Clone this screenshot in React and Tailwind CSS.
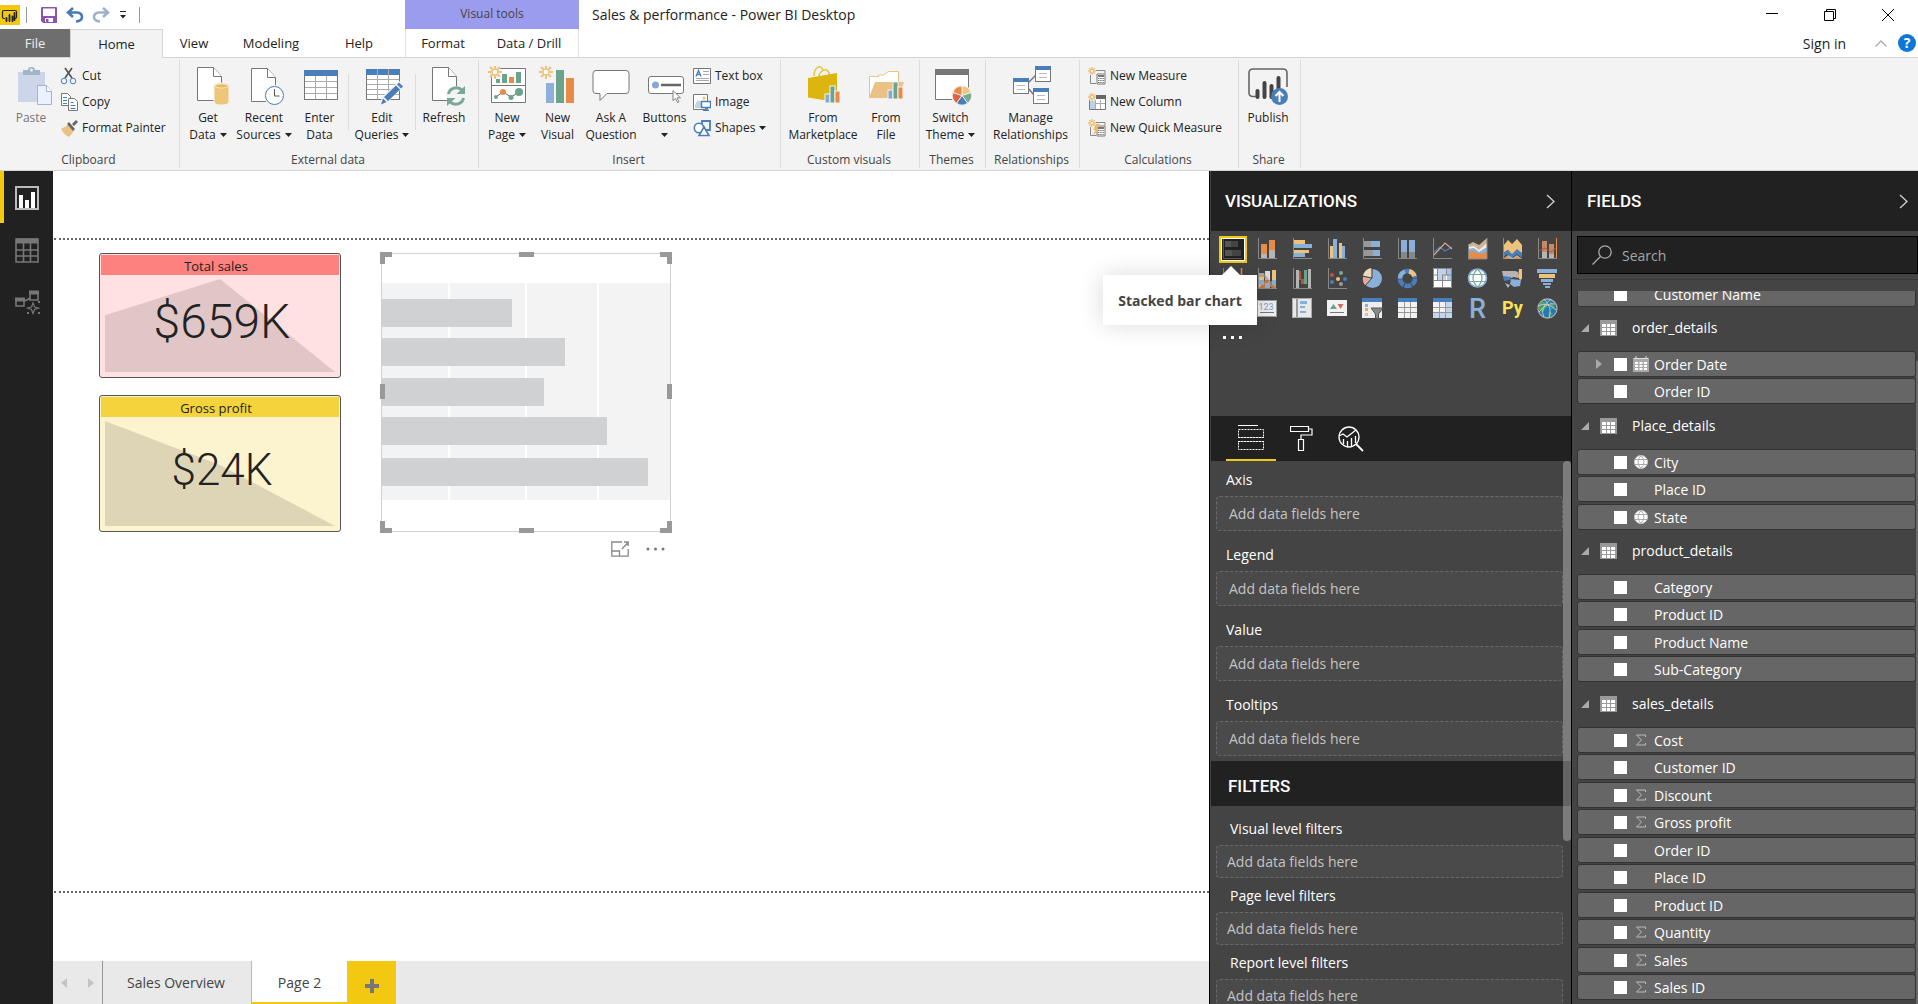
import React from "react";

const GREY = "#777";
const BLUE = "#4a7ebb";

/* ---------- shared drawing parts ---------- */

function Doc({ x, y }) {
  return (
    <g fill="#fff" stroke={GREY}>
      <path d={`M${x + 0.5} ${y + 0.5}h16l8 9v24h-24z`} />
      <path d={`M${x + 16.5} ${y + 0.5}v9h8`} />
    </g>
  );
}

function Sun({ x, y, r = 7 }) {
  const rays = [0, 45, 90, 135, 180, 225, 270, 315];
  return (
    <g stroke="#eec27a" strokeWidth={r > 5 ? 2 : 1.4} fill="none">
      {rays.map((a) => (
        <path key={a} d={`M${x} ${y - r}V${y - r * 0.5}`} transform={`rotate(${a} ${x} ${y})`} />
      ))}
      <circle cx={x} cy={y} r={r * 0.42} strokeWidth="1.4" fill="#fff" />
    </g>
  );
}

function MiniBars({ x, y }) {
  return (
    <g stroke="#f3f3f3" strokeWidth="1">
      <rect x={x} y={y + 8} width="5" height="9" fill="#84aad2" />
      <rect x={x + 5} y={y} width="5" height="17" fill="#6ca38d" />
      <rect x={x + 10} y={y + 5} width="5" height="12" fill="#e88b46" />
    </g>
  );
}

function Big({ children }) {
  return (
    <svg width="44" height="40" viewBox="0 0 44 40" className="shrink-0" aria-hidden="true">
      {children}
    </svg>
  );
}

/* ---------- ribbon icons ---------- */

const PasteIcon = () => (
  <Big>
    <path d="M9 6h27v30H9z" fill="#ccd6e8" />
    <path d="M14 4h5a3.5 3 0 0 1 7 0h5v5H14z" fill="#a2b3ce" />
    <circle cx="22.500" cy="4" r="1.500" fill="#f3f3f3" />
    <path d="M28.500 19.500h9l5 6v13h-14z" fill="#e9f2fe" stroke="#a2b3ce" />
    <path d="M37.500 19.500v6h5" fill="#fff" stroke="#a2b3ce" />
  </Big>
);
const GetDataIcon = () => (
  <Big>
    <Doc x={11} y={1} />
    <path d="M28 20c0-4 15-4 15 0v16c0 4-15 4-15 0z" fill="#eec67a" stroke="#f3f3f3" />
    <ellipse cx="35.500" cy="20" rx="6.500" ry="2" fill="#e8b862" stroke="#f8e6c0" />
  </Big>
);
const RecentIcon = () => (
  <Big>
    <Doc x={9} y={2} />
    <circle cx="32.500" cy="29.500" r="10.500" fill="#f3f3f3" />
    <circle cx="32.500" cy="29.500" r="9" fill="#fff" stroke={BLUE} />
    <path d="M32.500 23v7h5" fill="none" stroke="#555" />
  </Big>
);
const EnterDataIcon = () => (
  <Big>
    <rect x="6.500" y="4.500" width="33" height="29" fill="#fff" stroke={GREY} />
    <path d="M6 4h34v6H6z" fill={BLUE} />
    <path d="M17.500 10v23M28.500 10v23M7 15.500h32M7 21.500h32M7 27.500h32" stroke="#aaa" />
  </Big>
);
const EditQueriesIcon = () => (
  <Big>
    <rect x="6.500" y="3.500" width="33" height="30" fill="#fff" stroke={GREY} />
    <path d="M6 3h34v6H6z" fill={BLUE} />
    <path d="M17.500 3v30M28.500 3v30M7 13.500h32M7 18.500h32M7 23.500h32M7 28.500h32" stroke="#aaa" />
    <path d="M20 39l2-8 17-16 5 5-17 17z" fill="#f3f3f3" />
    <path d="M21 38.500l2-6 3.500 3.500zM24 31l12-11.500 4 4L28 35zM37 18.500l2-2 4 4-2 2z" fill={BLUE} />
  </Big>
);
const RefreshIcon = () => (
  <Big>
    <Doc x={10} y={1} />
    <circle cx="34" cy="30" r="10" fill="#f3f3f3" />
    <path d="M26.500 28a8 7.500 0 0 1 13.500-4M41.500 32a8 7.500 0 0 1-13.500 4" fill="none" stroke="#78a898" strokeWidth="3" />
    <path d="M43 20v8h-8.500zM25 40v-8h8.500z" fill="#78a898" />
  </Big>
);
const NewPageIcon = () => (
  <Big>
    <path d="M6.500 2.500h34v34h-34z" fill="#fff" stroke={GREY} />
    <path d="M7 19.500h33" stroke={GREY} />
    <path d="M17 8h5v9h-5zM31 6h5v11h-5zM11 13h4v4h-4z" fill="#6ca38d" />
    <path d="M24 11h5v6h-5z" fill="#e88b46" />
    <path d="M11 31l7-5 8 5 8-5" fill="none" stroke="#666" />
    <circle cx="11" cy="31" r="2" fill="#6ca38d" />
    <circle cx="18" cy="26" r="3" fill="#e88b46" />
    <circle cx="26" cy="31.500" r="2.500" fill="#6ca38d" />
    <circle cx="34" cy="26" r="4" fill="#6ca38d" />
    <circle cx="10" cy="6" r="6.500" fill="#f3f3f3" />
    <Sun x={10} y={6} />
  </Big>
);
const NewVisualIcon = () => (
  <Big>
    <path d="M10 17h8v20h-8z" fill="#8fb0d6" />
    <path d="M20 4h8v33h-8z" fill="#6ca38d" />
    <path d="M30 12h8v25h-8z" fill="#e88b46" />
    <Sun x={10} y={6} />
  </Big>
);
const AskIcon = () => (
  <Big>
    <path d="M7 4.500h30q3 0 3 3v17q0 3-3 3H18l-7 7v-7H7q-3 0-3-3v-17q0-3 3-3z" fill="#fff" stroke={GREY} />
  </Big>
);
const ButtonsIcon = () => (
  <Big>
    <rect x="5.500" y="10.500" width="35" height="17" rx="2.500" fill="#fff" stroke={GREY} />
    <circle cx="12.500" cy="19" r="3.500" fill="#84aad2" />
    <path d="M18 19h20" stroke="#666" strokeWidth="2.500" />
    <path d="M30 24.500v10l2.500-2 2 4 1.500-.7-2-4h3.500z" fill="#fff" stroke="#777" strokeWidth=".9" />
  </Big>
);
const MarketIcon = () => (
  <Big>
    <path d="M13 10c0-9 7-12 9-6M18 11c0-6 9-12 11-1" fill="none" stroke="#e6c33f" strokeWidth="1.500" />
    <path d="M7 12l29-5v26l-14 1-15-2.500z" fill="#ddb50f" />
    <MiniBars x={24} y={20} />
  </Big>
);
const FromFileIcon = () => (
  <Big>
    <path d="M5.500 31V10.500h9V9h5l5-3.500h10v25z" fill="#fff" stroke="#eec286" />
    <path d="M5 32l6-16h29l-6 16z" fill="#ecc186" />
    <MiniBars x={24} y={16} />
  </Big>
);
const ThemeIcon = () => {
  const colors = ["#eec67a", "#78a898", "#4a7ebb", "#e0603f", "#e88b46"];
  return (
    <Big>
      <path d="M6.500 3.500h33v30h-33z" fill="#fff" stroke={GREY} />
      <path d="M6 3h34v6H6z" fill={GREY} />
      <circle cx="33" cy="29.500" r="10.500" fill="#f3f3f3" />
      {colors.map((c, i) => (
        <path key={c} d="M33 29.500V20a9.500 9.500 0 0 1 9 6.600z" fill={c} stroke="#f3f3f3" strokeWidth=".8" transform={`rotate(${i * 72} 33 29.500)`} />
      ))}
    </Big>
  );
};
function RelBox({ x, y }) {
  return (
    <g>
      <rect x={x + 0.5} y={y + 0.5} width="15" height="15" fill="#fff" stroke={GREY} />
      <rect x={x} y={y} width="16" height="4" fill={BLUE} />
      <path d={`M${x + 4} ${y + 7.5}h8M${x + 4} ${y + 11.5}h8`} stroke="#bbb" />
    </g>
  );
}
const RelationsIcon = () => (
  <Big>
    <path d="M18 18l9-9M18 21l7 8" stroke={GREY} strokeWidth="1.500" />
    <RelBox x={4} y={12} />
    <RelBox x={26} y={0} />
    <RelBox x={24} y={22} />
  </Big>
);
const PublishIcon = () => (
  <Big>
    <path d="M10 30.500H7q-4 0-4-4V7q0-4 4-4h30q4 0 4 4v14" fill="none" stroke="#666" strokeWidth="1.600" />
    <path d="M11.500 25v6M18.500 17v14M25.500 20v11M32.500 12v10" stroke="#444" strokeWidth="4" strokeLinecap="round" />
    <circle cx="33.500" cy="30.500" r="8.500" fill={BLUE} />
    <path d="M33.500 36V26M29.500 30l4-4 4 4" fill="none" stroke="#fff" strokeWidth="2" />
  </Big>
);

function Small({ children }) {
  return (
    <svg width="18" height="18" viewBox="0 0 18 18" className="shrink-0" aria-hidden="true">
      {children}
    </svg>
  );
}
const CutIcon = () => (
  <Small>
    <path d="M5 1l7 10M12 1L5 11" stroke="#555" strokeWidth="1.700" />
    <circle cx="4" cy="14" r="2.800" fill="none" stroke={BLUE} />
    <circle cx="13" cy="14" r="2.800" fill="none" stroke={BLUE} />
  </Small>
);
const CopyIcon = () => (
  <Small>
    <path d="M1.500.5h6l3 3v9h-9z" fill="#fff" stroke={GREY} />
    <path d="M3 4.500h4M3 7.500h4M3 10.500h4" stroke={BLUE} />
    <path d="M8.500 5.500h6l3 3v9h-9z" fill="#fff" stroke={GREY} />
    <path d="M10.500 9.500h3M10.500 12.500h5M10.500 15.500h5" stroke={BLUE} />
  </Small>
);
const PainterIcon = () => (
  <Small>
    <path d="M1 10l7-4 6 6-5 6q-5-2-8-8z" fill="#ecc186" />
    <path d="M7 5l2-2 6 7-2 2zM12 5l4-4 2 2-4 4z" fill="#666" />
  </Small>
);
const TextBoxIcon = () => (
  <Small>
    <path d="M.5 1.500h17v15H.500z" fill="#fff" stroke={GREY} />
    <path d="M3 9.500l2.500-6 2.500 6M4 7.500h3" fill="none" stroke={BLUE} strokeWidth="1.400" />
    <path d="M10 4.500h6M10 7.500h6M3 11.500h13M3 13.500h13" stroke="#aaa" />
  </Small>
);
const ImageIcon = () => (
  <Small>
    <path d="M.5 1.500h14v15H.500z" fill="#fff" stroke={GREY} />
    <circle cx="11" cy="5" r="1.600" fill="#eec27a" />
    <path d="M2 15v-3q3-7 6-3v6z" fill="#c3d3e8" />
    <path d="M8.500 8.500h9v6h-9z" fill="#fff" stroke={BLUE} strokeWidth="1.400" />
    <path d="M13 15v2M10 17.500h6" stroke={BLUE} strokeWidth="1.500" />
  </Small>
);
const ShapesIcon = () => (
  <Small>
    <path d="M9 2h8v9H9z" fill="none" stroke={BLUE} strokeWidth="1.800" />
    <circle cx="6" cy="9" r="4.700" fill="#fff" stroke={BLUE} strokeWidth="1.600" />
    <path d="M11 8l5 8.500H6z" fill="#fff" stroke={BLUE} strokeWidth="1.600" />
  </Small>
);
const Calculator = () => (
  <g>
    <path d="M2.500 8v8.500H8M8 3.500h9v3" fill="none" stroke="#888" />
    <path d="M9 7h8v10H9z" fill="#fff" stroke="#777" />
    <path d="M10 8h6v2h-6z" fill="#777" />
    <path d="M10 11.500h6M10 13.500h6M10 15.500h6" stroke="#777" strokeDasharray="1.500 .7" />
  </g>
);
const MeasureIcon = () => (
  <Small>
    <Calculator />
    <Sun x={4} y={4} r={4} />
  </Small>
);
const ColumnIcon = () => (
  <Small>
    <path d="M1.500 2.500h16v14h-16z" fill="#fff" stroke="#777" />
    <path d="M2 8h5v8H2z" fill="#bdd2ea" />
    <path d="M8 2h10v4H8z" fill="#666" />
    <path d="M7.500 7v9M12.500 7v9M7 10.500h10" stroke="#aaa" />
    <circle cx="4" cy="4" r="4" fill="#f3f3f3" />
    <Sun x={4} y={4} r={4} />
  </Small>
);
const QuickIcon = () => (
  <Small>
    <Calculator />
    <Sun x={4} y={4} r={4} />
    <path d="M8 5h4l-3 5h2l-6 7 2-6H5z" fill="#eeb96b" />
  </Small>
);

/* ---------- ribbon ---------- */

const Caret = () => (
  <svg width="7" height="4" viewBox="0 0 7 4" className="shrink-0" aria-hidden="true">
    <path d="M0 0h7L3.500 4z" fill="#222" />
  </svg>
);

function BigButton({ icon: Icon, lines, caret, width, muted }) {
  return (
    <button className={`${width} flex shrink-0 flex-col items-center text-[12px] leading-[17px] whitespace-nowrap ${muted ? "text-[#777]" : "text-[#222]"}`}>
      <Icon />
      <span className="mt-[3px]">{lines[0]}</span>
      <span className="flex h-[17px] items-center gap-1">
        {lines[1]}
        {caret && <Caret />}
      </span>
    </button>
  );
}

function SmallButton({ icon: Icon, label, caret }) {
  return (
    <button className="flex h-[26px] items-center gap-1 text-[12px] whitespace-nowrap text-[#222]">
      <Icon />
      <span>{label}</span>
      {caret && <Caret />}
    </button>
  );
}

function Group({ label, width, children }) {
  return (
    <section className={`${width} flex shrink-0 flex-col justify-between border-r border-[#dcdcdc] text-[#444]`}>
      <div className="flex pt-1.5">{children}</div>
      <h2 className="pr-[2px] text-center text-[12px] leading-[17px]">{label}</h2>
    </section>
  );
}

const Rule = () => <div className="mx-px mt-2 h-[56px] w-px shrink-0 bg-[#dcdcdc]" />;

function Ribbon() {
  return (
    <div className="flex h-[114px] shrink-0 border-y border-[#d4d4d4] bg-[#f3f3f3] py-[2px]">
      <Group label="Clipboard" width="w-[180px]">
        <div className="flex w-[60px] shrink-0 justify-center pl-[2px]">
          <BigButton icon={PasteIcon} lines={["Paste"]} width="w-[44px]" muted />
        </div>
        <div className="-mt-[3px] flex flex-col">
          <SmallButton icon={CutIcon} label="Cut" />
          <SmallButton icon={CopyIcon} label="Copy" />
          <SmallButton icon={PainterIcon} label="Format Painter" />
        </div>
      </Group>
      <Group label="External data" width="w-[299px]">
        <BigButton icon={GetDataIcon} lines={["Get", "Data"]} caret width="w-[56px]" />
        <BigButton icon={RecentIcon} lines={["Recent", "Sources"]} caret width="w-[56px]" />
        <BigButton icon={EnterDataIcon} lines={["Enter", "Data"]} width="w-[55px]" />
        <Rule />
        <BigButton icon={EditQueriesIcon} lines={["Edit", "Queries"]} caret width="w-[64px]" />
        <Rule />
        <BigButton icon={RefreshIcon} lines={["Refresh"]} width="w-[54px]" />
      </Group>
      <Group label="Insert" width="w-[302px]">
        <BigButton icon={NewPageIcon} lines={["New", "Page"]} caret width="w-[56px]" />
        <BigButton icon={NewVisualIcon} lines={["New", "Visual"]} width="w-[45px]" />
        <BigButton icon={AskIcon} lines={["Ask A", "Question"]} width="w-[62px]" />
        <BigButton icon={ButtonsIcon} lines={["Buttons"]} caret width="w-[45px]" />
        <div className="-mt-[3px] ml-1.5 flex flex-col">
          <SmallButton icon={TextBoxIcon} label="Text box" />
          <SmallButton icon={ImageIcon} label="Image" />
          <SmallButton icon={ShapesIcon} label="Shapes" caret />
        </div>
      </Group>
      <Group label="Custom visuals" width="w-[139px]">
        <BigButton icon={MarketIcon} lines={["From", "Marketplace"]} width="w-[84px]" />
        <BigButton icon={FromFileIcon} lines={["From", "File"]} width="w-[42px]" />
      </Group>
      <Group label="Themes" width="w-[66px]">
        <BigButton icon={ThemeIcon} lines={["Switch", "Theme"]} caret width="w-[61px]" />
      </Group>
      <Group label="Relationships" width="w-[94px]">
        <BigButton icon={RelationsIcon} lines={["Manage", "Relationships"]} width="w-[89px]" />
      </Group>
      <Group label="Calculations" width="w-[159px]">
        <div className="-mt-[3px] ml-2 flex flex-col">
          <SmallButton icon={MeasureIcon} label="New Measure" />
          <SmallButton icon={ColumnIcon} label="New Column" />
          <SmallButton icon={QuickIcon} label="New Quick Measure" />
        </div>
      </Group>
      <Group label="Share" width="w-[62px]">
        <BigButton icon={PublishIcon} lines={["Publish"]} width="w-[58px]" />
      </Group>
    </div>
  );
}

/* ---------- title bar ---------- */

function TopBar() {
  const tab = "flex h-[28px] items-center justify-center pt-[2px] text-[13px]";
  return (
    <header className="flex h-[57px] shrink-0 bg-white text-[#222]">
      <div className="flex flex-col">
        <div className="flex h-[29px] items-center">
          <svg width="20" height="20" viewBox="0 0 20 20" aria-label="Power BI">
            <path d="M0 0h20v20H0z" fill="#f2c811" />
            <path d="M5 13.500H4Q2.500 13.500 2.500 12V7Q2.500 5.500 4 5.500h11q1.500 0 1.500 1.500v5q0 1.500-1.500 1.500" fill="none" stroke="#222" strokeWidth="1.200" />
            <path d="M6.500 13v3M9.500 10v6M12.500 11.500V16M14.500 8v7" stroke="#222" strokeWidth="1.800" strokeLinecap="round" />
          </svg>
          <span className="ml-1.5 h-4 w-px bg-[#999]" />
          <button aria-label="Save" className="ml-[14px]">
            <svg width="16" height="16" viewBox="0 0 16 16">
              <path d="M1 0h14q1 0 1 1v15H2l-2-2V1q0-1 1-1z" fill="#8a56ac" />
              <path d="M2 1.500h12V9H2zM4 11h8v4H4z" fill="#fff" />
              <path d="M5 12h2.500v3H5z" fill="#8a56ac" />
            </svg>
          </button>
          <button aria-label="Undo" className="ml-[9px]">
            <svg width="18" height="16" viewBox="0 0 18 16">
              <path d="M2 5.500h9q5 .5 5 4.500t-6 4.500M7 1L2 5.500 7 10" fill="none" stroke="#457ab4" strokeWidth="2.600" />
            </svg>
          </button>
          <button aria-label="Redo" className="ml-2">
            <svg width="18" height="16" viewBox="0 0 18 16">
              <path d="M16 5.500H7Q2 6 2 10t6 4.500M11 1l5 4.500L11 10" fill="none" stroke="#9fb1cb" strokeWidth="2.600" />
            </svg>
          </button>
          <button aria-label="Customize toolbar" className="ml-[9px]">
            <svg width="8" height="8" viewBox="0 0 8 8">
              <path d="M1 .5h6" stroke="#222" />
              <path d="M1 4h6L4 7.500z" fill="#222" />
            </svg>
          </button>
          <span className="ml-3 h-4 w-px bg-[#999]" />
        </div>
        <nav className="flex">
          <button className={`${tab} w-[70px] bg-[#6e6e6e] text-[#eee]`}>File</button>
          <button className={`${tab} relative z-10 -mb-px h-[29px] w-[93px] border border-b-0 border-[#d4d4d4] bg-[#f3f3f3]`}>Home</button>
          <button className={`${tab} w-[62px]`}>View</button>
          <button className={`${tab} w-[92px]`}>Modeling</button>
          <button className={`${tab} w-[84px]`}>Help</button>
        </nav>
      </div>
      <div className="ml-1 flex w-[174px] flex-col">
        <div className="flex h-[29px] items-center justify-center bg-[#9c9cee] pb-[2px] text-[12px] text-[#444]">Visual tools</div>
        <div className="flex border-x border-[#e2e2e2]">
          <button className={`${tab} w-[74px]`}>Format</button>
          <button className={`${tab} w-[98px]`}>Data / Drill</button>
        </div>
      </div>
      <h1 className="ml-[13px] h-[29px] text-[14px] leading-[29px]">Sales &amp; performance - Power BI Desktop</h1>
      <div className="ml-auto flex flex-col items-end">
        <div className="flex h-[29px] items-center gap-[46px] pr-6">
          <button aria-label="Minimize">
            <svg width="12" height="12" viewBox="0 0 12 12"><path d="M0 4.500h12" stroke="#000" /></svg>
          </button>
          <button aria-label="Restore">
            <svg width="12" height="12" viewBox="0 0 12 12" fill="none" stroke="#000">
              <path d="M.5 2.500h9v9h-9zM2.500 2V.500h9v9H10" />
            </svg>
          </button>
          <button aria-label="Close">
            <svg width="12" height="12" viewBox="0 0 12 12"><path d="M0 0l12 12M12 0L0 12" stroke="#000" /></svg>
          </button>
        </div>
        <div className="flex h-[28px] items-center pr-[2px]">
          <button className="text-[14px]">Sign in</button>
          <button aria-label="Collapse ribbon" className="ml-[29px]">
            <svg width="12" height="7" viewBox="0 0 12 7"><path d="M.5 6.500L6 1l5.500 5.500" fill="none" stroke="#aaa" strokeWidth="1.300" /></svg>
          </button>
          <button aria-label="Help" className="ml-[11px] flex size-[18px] items-center justify-center rounded-full bg-[#0f76d7] text-[14px] leading-none font-bold text-white">?</button>
        </div>
      </div>
    </header>
  );
}

/* ---------- left rail ---------- */

function Rail() {
  const item = "flex h-[52px] w-full items-center border-l-4 pt-[2px] pl-[11px]";
  return (
    <nav className="w-[53px] shrink-0 bg-[#212121]">
      <button aria-label="Report" className={`${item} border-[#f2c811]`}>
        <svg width="24" height="24" viewBox="0 0 24 24">
          <path d="M1 1h22v22H1z" fill="none" stroke="#bbb" strokeWidth="2" />
          <path d="M4 9h4v13H4zM10 14h4v8h-4zM16 6h4v16h-4z" fill="#fff" />
        </svg>
      </button>
      <button aria-label="Data" className={`${item} border-transparent`}>
        <svg width="24" height="25" viewBox="0 0 24 25" stroke="#777">
          <path d="M1 1h22v23H1z" fill="none" strokeWidth="1.600" />
          <path d="M1 3h22" strokeWidth="5" />
          <path d="M8.500 5v19M15.500 5v19M1 12h22M1 18h22" strokeWidth="1.600" />
        </svg>
      </button>
      <button aria-label="Model" className={`${item} border-transparent`}>
        <svg width="26" height="25" viewBox="0 0 26 25" fill="none" stroke="#777" strokeWidth="1.600">
          <path d="M15 2h8v8h-8zM1 9h8v7H1zM10 11l5-3" />
          <path d="M14 2.500h10M0 9.500h10" strokeWidth="4" />
          <path d="M18 13l1.500 4 4 1-4 1.500-1.500 4-1.500-4-4-1.500 4-1z" strokeWidth="1.200" />
          <path d="M23 12h2M23 23h2M12 23h2" strokeWidth="2" />
        </svg>
      </button>
    </nav>
  );
}

/* ---------- canvas ---------- */

const bars = [
  { top: 45, width: 130 },
  { top: 84, width: 183 },
  { top: 124, width: 162 },
  { top: 163, width: 225 },
  { top: 204, width: 266 },
];

function Card({ title, value, place, head, body, points, size }) {
  return (
    <article className={`${place} ${body} absolute flex w-[242px] flex-col rounded-[3px] border border-[#555] p-px`}>
      <h3 className={`${head} h-[20px] pr-2 text-center text-[13px] leading-[23px] text-[#222]`}>{title}</h3>
      <div className="relative m-1 flex flex-1 items-center justify-center">
        <svg viewBox="0 0 100 100" preserveAspectRatio="none" className="absolute inset-0 size-full" aria-hidden="true">
          <polygon points={points} fill="#212121" fillOpacity=".14" />
        </svg>
        <p className={`${size} relative pb-2 pl-1 font-[Roboto] leading-none font-light text-[#222]`}>{value}</p>
      </div>
    </article>
  );
}

function BarPlaceholder() {
  return (
    <figure className="absolute top-[13px] left-[327px] h-[279px] w-[290px] border border-[#d2d2d2] bg-white">
      <div className="mt-[29px] flex h-[217px] gap-0.5">
        <div className="w-[66px] bg-[#f3f3f3]" />
        <div className="w-[75px] bg-[#f3f3f3]" />
        <div className="w-[70px] bg-[#f3f3f3]" />
        <div className="flex-1 bg-[#f3f3f3]" />
      </div>
      {bars.map((b) => (
        <div key={b.top} className="absolute left-0 h-[28px] bg-[#d0d1d2]" style={{ top: b.top, width: b.width }} />
      ))}
      <span className="absolute -top-[2px] -left-[2px] size-3 border-t-[5px] border-l-[5px] border-[#999]" />
      <span className="absolute -top-[2px] -right-[2px] size-3 border-t-[5px] border-r-[5px] border-[#999]" />
      <span className="absolute -bottom-[2px] -left-[2px] size-3 border-b-[5px] border-l-[5px] border-[#999]" />
      <span className="absolute -right-[2px] -bottom-[2px] size-3 border-r-[5px] border-b-[5px] border-[#999]" />
      <span className="absolute -top-[2px] left-[137px] h-[5px] w-[15px] bg-[#999]" />
      <span className="absolute -bottom-[2px] left-[137px] h-[5px] w-[15px] bg-[#999]" />
      <span className="absolute top-[130px] -left-[2px] h-[15px] w-[5px] bg-[#999]" />
      <span className="absolute top-[130px] -right-[2px] h-[15px] w-[5px] bg-[#999]" />
      <div className="absolute top-[287px] right-[5px] flex items-center gap-[17px]">
        <button aria-label="Focus mode">
          <svg width="18" height="16" viewBox="0 0 18 16" fill="none" stroke="#888">
            <path d="M11 1H.800v14.200h16.400V8M1 10h7.500v5M11 8l6-6.500M13 1h4.200v4" strokeWidth="1.300" />
          </svg>
        </button>
        <button aria-label="More options">
          <svg width="19" height="4" viewBox="0 0 19 4" fill="#777">
            <circle cx="2" cy="2" r="1.500" /><circle cx="9.500" cy="2" r="1.500" /><circle cx="17" cy="2" r="1.500" />
          </svg>
        </button>
      </div>
    </figure>
  );
}

function Canvas() {
  return (
    <main className="flex min-w-0 flex-1 flex-col bg-white">
      <div className="flex min-h-0 flex-1 flex-col pt-[67px] pb-[68px] pl-px">
        <div className="relative flex-1 border-y-2 border-dotted border-[#666]">
          <Card title="Total sales" value="$659K" place="top-[13px] left-[45px] h-[125px]" head="bg-[#fd817e]" body="bg-[#ffe1e2]" points="0,39 50,0 100,100 0,100" size="text-[48px]" />
          <Card title="Gross profit" value="$24K" place="top-[155px] left-[45px] h-[137px]" head="bg-[#f4d33c]" body="bg-[#fcf3cf]" points="0,0 50,42 100,100 0,100" size="text-[44px]" />
          <BarPlaceholder />
        </div>
      </div>
      <footer className="flex h-[43px] shrink-0 bg-[#e9e9e9] text-[14px] text-[#444]">
        <div className="flex w-[50px] items-center justify-between border-r border-[#999] px-2">
          <button aria-label="Previous page"><svg width="6" height="10" viewBox="0 0 6 10"><path d="M6 0v10L0 5z" fill="#c4c4c4" /></svg></button>
          <button aria-label="Next page"><svg width="6" height="10" viewBox="0 0 6 10"><path d="M0 0v10l6-5z" fill="#c4c4c4" /></svg></button>
        </div>
        <button className="w-[149px] border-r border-[#bbb] pr-[2px]">Sales Overview</button>
        <button className="w-[95px] border-b-2 border-[#f2c811] bg-white pt-0.5">Page 2</button>
        <button aria-label="New page" className="flex w-[49px] items-center justify-center bg-[#f2c811] pt-1.5">
          <svg width="14" height="14" viewBox="0 0 14 14"><path d="M7 0v14M0 7h14" stroke="#777" strokeWidth="4" /></svg>
        </button>
      </footer>
    </main>
  );
}

/* ---------- visualization gallery ---------- */

const O = "#e88b46";
const Y = "#ecc27c";
const B = "#8aafd8";
const D = "#4a7ebb";
const G = "#b5b5b5";
const Axes = () => <path d="M1.500 0v20.500H20" fill="none" stroke="#888" />;
const R = ({ x, y, w, h, f }) => <rect x={x} y={y} width={w} height={h} fill={f} />;

const visuals = [
  ["Stacked bar chart", <><path d="M1.500 0v20.500H20" stroke="#555" fill="none" /><R x={3} y={3} w={6} h={6} f="#555" /><R x={9} y={3} w={7} h={6} f="#444" /><R x={3} y={12} w={7} h={6} f="#555" /><R x={10} y={12} w={9} h={6} f="#444" /></>],
  ["Stacked column chart", <><Axes /><R x={4} y={6} w={6} h={10} f={O} /><R x={4} y={16} w={6} h={4} f={G} /><R x={12} y={2} w={6} h={10} f={O} /><R x={12} y={12} w={6} h={8} f={G} /></>],
  ["Clustered bar chart", <><Axes /><R x={2} y={2} w={11} h={4} f={Y} /><R x={2} y={6} w={18} h={4} f={B} /><R x={2} y={12} w={15} h={3} f={Y} /><R x={2} y={15} w={11} h={4} f={B} /></>],
  ["Clustered column chart", <><Axes /><R x={3} y={8} w={3} h={12} f={Y} /><R x={6} y={1} w={4} h={19} f={B} /><R x={12} y={5} w={3} h={15} f={Y} /><R x={15} y={8} w={3} h={12} f={B} /></>],
  ["100% stacked bar chart", <><Axes /><R x={2} y={3} w={7} h={6} f="#999" /><R x={9} y={3} w={9} h={6} f={B} /><R x={2} y={12} w={9} h={6} f="#999" /><R x={11} y={12} w={7} h={6} f={B} /></>],
  ["100% stacked column chart", <><Axes /><R x={4} y={2} w={6} h={12} f={B} /><R x={4} y={14} w={6} h={6} f="#888" /><R x={12} y={2} w={6} h={12} f={B} /><R x={12} y={14} w={6} h={6} f="#888" /></>],
  ["Line chart", <><Axes /><path d="M2 14l6-5 5 4 7-4" fill="none" stroke={D} strokeWidth="1.300" /><path d="M2 17l11-12 7 6" fill="none" stroke="#d9a98f" strokeWidth="1.200" /></>],
  ["Area chart", <><path d="M1 7l5-3 6 3 8-7v21H1z" fill="#cdb38e" /><path d="M1 9l6-1 5 4 8-7v16H1z" fill="#eee" /><path d="M1 11l6-1 5 4 8-5v12H1z" fill={B} /><path d="M1 14l5-1 6 3 8-2v7H1z" fill={O} /><path d="M1.500 6v15M20 0v21H1" fill="none" stroke="#888" /></>],
  ["Stacked area chart", <><path d="M1 8l5-6 4 4 5-5 5 6v9l-5-4-5 5-4-5-5 3z" fill={Y} /><path d="M1 15l5-3 4 4 5-5 5 4v5l-5-4-5 4-5-4-4 4z" fill={D} /><path d="M1 21l5-4 5 3 4-3 5 4z" fill="#9cbccb" /><path d="M1 21l4-3 4 3zM12 21l3-3 4 3z" fill={O} /><path d="M1.500 0v21" fill="none" stroke="#888" /></>],
  ["Line and stacked column chart", <><Axes /><R x={5} y={3} w={5} h={11} f="#c48a66" /><R x={5} y={14} w={5} h={6} f={G} /><R x={12} y={6} w={5} h={10} f="#c48a66" /><R x={12} y={16} w={5} h={4} f={G} /><path d="M2 13l6-3 6 4 5-4" stroke="#a55" fill="none" /><path d="M19.500 0v20" stroke={O} /></>],
  ["Line and clustered column chart", <><Axes /><path d="M19.500 0v20" stroke={O} strokeWidth="1.500" /></>],
  ["Ribbon chart", <><R x={2} y={5} w={5} h={15} f={Y} /><R x={8} y={3} w={5} h={17} f="#ddd" /><R x={15} y={2} w={4} h={18} f={Y} /><path d="M2 5h5l6 8h6v7l-6-1-6-10H2z" fill="#999" opacity=".7" /><path d="M2 20l6-8h5l-5 8zM13 14l6 6h-4l-4-4z" fill="#c8773a" /><R x={2} y={12} w={5} h={5} f={B} /><R x={8} y={15} w={5} h={5} f={B} /><R x={15} y={12} w={4} h={5} f={B} /><Axes /></>],
  ["Waterfall chart", <><Axes /><R x={4} y={2} w={3} h={18} f={G} /><path d="M7 3h2v8h3v5h-3v-4H7z" fill="#b5553c" /><R x={12} y={2} w={3} h={14} f="#6ca38d" /><R x={16} y={1} w={3} h={19} f={G} /></>],
  ["Scatter chart", <><Axes /><circle cx="14" cy="5" r="2" fill="#78a898" /><circle cx="11" cy="11" r="2" fill={Y} /><circle cx="18" cy="11" r="2" fill={D} /><circle cx="5" cy="14" r="2" fill={D} /><circle cx="14" cy="16" r="2" fill="#999" /><circle cx="5" cy="7" r="2" fill="#c0504d" /></>],
  ["Pie chart", <><circle cx="10.500" cy="10.500" r="9.500" fill={B} /><path d="M9.500 9.500V0A9.500 9.500 0 0 0 1 8z" fill="#f0dab5" /><path d="M9 10.500L1 9a9.500 9.500 0 0 0 2.500 8.500z" fill="#e8a898" /><path d="M10 0v10L3 18M10 10L0 8" stroke="#444" fill="none" /></>],
  ["Donut chart", <><circle cx="10.500" cy="10.500" r="7.500" fill="none" stroke={D} strokeWidth="4.500" strokeDasharray="6.900 .950" /><path d="M12 3.200a7.500 7.500 0 0 1 5.500 5" fill="none" stroke={Y} strokeWidth="4.500" /><path d="M3 10.500a7.500 7.500 0 0 1 5-7" fill="none" stroke={B} strokeWidth="4.500" /></>],
  ["Treemap", <><R x={1} y={0} w={19} h={20} f="#fff" /><R x={6} y={1} w={8} h={11} f="#bfd2ea" /><R x={15} y={1} w={4} h={11} f="#a9c4e4" /><path d="M1.500.5h18v19h-18zM5.500 0v12M14.500 0v7M1 12.500h19M10.500 12v8M1 7h4M10 7h10M10.500 7v5" fill="none" stroke="#888" /></>],
  ["Map", <><circle cx="10.500" cy="10" r="9" fill="#fff" stroke={B} strokeWidth="1.600" /><path d="M2 6.500h17M2 13.500h17M10.500 1q-9 9 0 18M10.500 1q9 9 0 18" fill="none" stroke="#78a898" strokeWidth="1.200" /></>],
  ["Filled map", <><path d="M0 3h13l3 1v6l-4-1-6 2-5-3z" fill="#b5b5b5" /><path d="M17 1h3v10l-2 1-2-3z" fill={Y} /><path d="M1 8l8 1-1 3-6 1z" fill={D} /><path d="M9 11l10 1-1 6-6 1-4-3z" fill={B} /><path d="M3 15l5 2-2 3z" fill="#b5b5b5" /></>],
  ["Funnel", <><R x={0} y={1} w={20} h={4} f={B} /><R x={2} y={6} w={16} h={4} f={Y} /><R x={4} y={11} w={12} h={3} f={B} /><R x={6} y={15} w={8} h={2} f={B} /><R x={8} y={18} w={5} h={2} f={B} /></>],
  ["Gauge", <path d="M2 17a8 8 0 0 1 17 0" fill="none" stroke={B} strokeWidth="4" />],
  ["Card", <><R x={0} y={2} w={20} h={17} f="#eee" /><path d="M3 14.500h14" stroke="#777" /><path d="M0.500 2.500h19v16H.500z" fill="none" stroke="#999" /><text x="1.500" y="12" fontSize="9" fontFamily="Roboto" fill="#7aa0cc">123</text></>],
  ["Multi-row card", <><R x={0} y={0} w={20} h={20} f="#e8e8e8" /><R x={4} y={1} w={2} h={18} f="#999" /><R x={8} y={3} w={7} h={3} f={B} /><R x={8} y={8} w={5} h={2} f={B} /><R x={8} y={13} w={6} h={2} f={B} /><path d="M.5.5h19v19H.500z" stroke="#aaa" fill="none" /></>],
  ["KPI", <><R x={0} y={2} w={20} h={16} f="#f2f2f2" /><path d="M3 11l3.500-5 3.500 5z" fill="#6ca38d" /><path d="M10.500 6h6L13.500 11z" fill="#d86a50" /><path d="M3 14.500h14" stroke="#777" /></>],
  ["Slicer", <><R x={0} y={0} w={20} h={20} f="#eee" /><R x={0} y={0} w={20} h={4} f={D} /><R x={3} y={6} w={3} h={3} f={B} /><R x={3} y={10} w={3} h={3} f="#f0a860" /><R x={3} y={15} w={3} h={3} f="#e8b8a8" /><path d="M9 10h12l-4.500 6v5l-3-1v-4z" fill="#888" stroke="#555" /></>],
  ["Table", <><R x={1} y={0} w={19} h={20} f="#f2f2f2" /><R x={1} y={0} w={19} h={4} f={D} /><path d="M7.500 4v16M13.500 4v16M1 9.500h19M1 14.500h19" stroke="#999" fill="none" /></>],
  ["Matrix", <><R x={1} y={0} w={19} h={20} f="#f2f2f2" /><R x={1} y={0} w={19} h={4} f={D} /><path d="M14 4h6v16H1v-5h13z" fill="#c3d6ee" /><path d="M7.500 4v16M13.500 4v16M1 9.500h19M1 14.500h19" stroke="#999" fill="none" /></>],
  ["R script visual", <text x="2" y="20" fontSize="27" fontFamily="Roboto" fontWeight="500" fill={B}>R</text>],
  ["Python visual", <text x="0" y="16" fontSize="18" fontFamily="Roboto" fontWeight="700" fill="#fbe257">Py</text>],
  ["ArcGIS Maps", <><circle cx="10.500" cy="10.500" r="9.500" fill="#1f78b8" stroke="#aaa" strokeWidth="1.300" /><path d="M4 4q6-1 6 5l-5 6-4-5zM13 3l5 6-4 3zM11 14l5 1-4 4z" fill="#4aa564" /><path d="M1 8q9-5 18 4M2 14q8-10 16-8M7 1q9 9 5 19M14 1Q2 10 7 19" fill="none" stroke="#ccc" strokeWidth=".9" /></>],
];

const VizIcon = ({ children }) => (
  <svg width="21" height="22" viewBox="0 0 21 22" className="overflow-visible" aria-hidden="true">{children}</svg>
);

function Tooltip() {
  return (
    <div role="tooltip" className="absolute top-[41px] -left-[112px] z-20 flex h-[50px] w-[154px] items-center justify-center bg-white text-[14px] font-bold whitespace-nowrap text-[#444] shadow-[0_0_24px_rgba(0,0,0,0.15)]">
      <svg width="18" height="9" viewBox="0 0 18 9" className="absolute -top-[9px] left-[119px]" aria-hidden="true">
        <path d="M0 9l9-9 9 9z" fill="#fff" />
      </svg>
      Stacked bar chart
    </div>
  );
}

const Chevron = () => (
  <svg width="9" height="15" viewBox="0 0 9 15" aria-hidden="true"><path d="M1 1l7 6.500L1 14" fill="none" stroke="#ccc" strokeWidth="1.400" /></svg>
);

function Well({ label }) {
  return (
    <section className="mb-[12px] pl-[5px]">
      <h3 className="flex h-[28px] items-center pb-1.5 pl-[10px] text-[14px] text-white">{label}</h3>
      <div className="flex h-[35px] items-center rounded-[4px] border border-dashed border-[#6a6a6a] bg-[#4a4a4a] pl-3 text-[14px] text-[#c4c4c4]">Add data fields here</div>
    </section>
  );
}

function FilterWell({ label }) {
  return (
    <section className="pl-[5px]">
      <h3 className="flex h-[34px] items-center pl-[14px] text-[14px] text-white">{label}</h3>
      <div className="flex h-[33px] items-center rounded-[4px] border border-dashed border-[#6a6a6a] bg-[#4a4a4a] pl-[10px] text-[14px] text-[#c4c4c4]">Add data fields here</div>
    </section>
  );
}

function Visualizations() {
  return (
    <aside className="flex w-[363px] shrink-0 flex-col border-x border-black bg-[#444] pl-px">
      <header className="flex h-[60px] shrink-0 items-center justify-between bg-[#212121] pr-4 pl-[14px]">
        <h2 className="pt-px font-[Roboto] text-[17px] font-medium text-white">VISUALIZATIONS</h2>
        <button aria-label="Collapse Visualizations"><Chevron /></button>
      </header>
      <div className="h-[185px] shrink-0 pt-[3px] pr-1.5 pl-1">
        <div className="grid grid-cols-10">
          {visuals.map(([name, art], i) => (
            <div key={name} className="relative flex h-[30px] items-center justify-center">
              <button aria-label={name} className={i === 0 ? "flex h-[27px] w-[28px] items-center justify-center border-2 border-[#f2c811] bg-[#212121] outline-1 -outline-offset-3 outline-white" : "flex"}>
                <VizIcon>{art}</VizIcon>
              </button>
              {i === 0 && <Tooltip />}
            </div>
          ))}
          <button aria-label="Import a custom visual" className="flex h-[28px] items-center justify-center">
            <svg width="19" height="4" viewBox="0 0 19 4" fill="#fff"><path d="M0 0h3v3H0zM8 0h3v3H8zM16 0h3v3h-3z" /></svg>
          </button>
        </div>
      </div>
      <div className="flex h-[45px] shrink-0 bg-[#212121] pl-[15px]">
        <button aria-label="Fields" className="flex w-[50px] items-center justify-center border-b-2 border-[#f2c811]">
          <svg width="26" height="25" viewBox="0 0 26 25" fill="none" stroke="#fff">
            <path d="M0 .5h20" />
            <path d="M.5 4.500h25v8H.500zM.5 16.500h25v8H.500z" strokeDasharray="2 1" />
            <path d="M0 12.500h26M0 16.500h26" strokeDasharray="2 1" />
          </svg>
        </button>
        <button aria-label="Format" className="flex w-[50px] items-center justify-center">
          <svg width="23" height="25" viewBox="0 0 23 25" fill="none" stroke="#fff">
            <path d="M.5.5h18v5h-18zM19 3h3v6H11v4M8.500 13.500h5v11h-5z" strokeWidth="1.200" />
          </svg>
        </button>
        <button aria-label="Analytics" className="flex w-[50px] items-center justify-center">
          <svg width="26" height="26" viewBox="0 0 26 26" fill="none" stroke="#fff">
            <circle cx="11" cy="11" r="10" strokeWidth="1.300" />
            <path d="M18 18l7 7" strokeWidth="1.800" />
            <path d="M1 10l4-2 4 3 9-7M5.500 13v5M9.500 15v6M13.500 12v8M17.500 10v7" strokeWidth="1.300" />
          </svg>
        </button>
      </div>
      <div className="relative min-h-0 flex-1 overflow-hidden">
        <div className="pt-[7px] pr-2">
          <Well label="Axis" />
          <Well label="Legend" />
          <Well label="Value" />
          <Well label="Tooltips" />
        </div>
        <h2 className="-mt-[7px] flex h-[45px] items-center bg-[#212121] pt-1.5 pl-[17px] font-[Roboto] text-[17px] font-medium text-white">FILTERS</h2>
        <div className="pt-[5px] pr-2">
          <FilterWell label="Visual level filters" />
          <FilterWell label="Page level filters" />
          <FilterWell label="Report level filters" />
        </div>
        <div className="absolute top-0 right-0 h-[380px] w-2 rounded-full bg-white/30" />
      </div>
    </aside>
  );
}

/* ---------- fields ---------- */

const tables = [
  { name: "order_details", fields: [["Order Date", "date"], ["Order ID"]] },
  { name: "Place_details", fields: [["City", "globe"], ["Place ID"], ["State", "globe"]] },
  { name: "product_details", fields: [["Category"], ["Product ID"], ["Product Name"], ["Sub-Category"]] },
  {
    name: "sales_details",
    fields: [["Cost", "sum"], ["Customer ID"], ["Discount", "sum"], ["Gross profit", "sum"], ["Order ID"], ["Place ID"], ["Product ID"], ["Quantity", "sum"], ["Sales", "sum"], ["Sales ID", "sum"]],
  },
];

function FieldIcon({ kind }) {
  if (kind === "date")
    return (
      <svg width="16" height="16" viewBox="0 0 16 16">
        <path d="M0 2h16v14H0z" fill="#aaa" />
        <path d="M1 2.500h14M3 0v3M13 0v3" stroke="#ddd" />
        <path d="M2 6h3v2H2zM6.500 6h3v2h-3zM11 6h3v2h-3zM2 9h3v2H2zM6.500 9h3v2h-3zM11 9h3v2h-3zM2 12h3v2H2zM6.500 12h3v2h-3zM11 12h3v2h-3z" fill="#fff" />
      </svg>
    );
  if (kind === "globe")
    return (
      <svg width="14" height="14" viewBox="0 0 14 14" fill="none" stroke="#aaa">
        <circle cx="7" cy="7" r="6.500" fill="#fff" stroke="#ccc" />
        <path d="M1 4.500h12M1 9.500h12M7 .5q-6 6.500 0 13M7 .5q6 6.500 0 13" />
      </svg>
    );
  if (kind === "sum")
    return (
      <svg width="12" height="12" viewBox="0 0 12 12" fill="none" stroke="#bbb">
        <path d="M10.500 3V1h-9l5 5-5 5h9V9" />
      </svg>
    );
  return null;
}

function Field({ name, kind }) {
  return (
    <li className="h-[27px] even:h-[28px]">
      <label className="flex h-[26px] items-center rounded-[3px] border border-[#333] bg-[#666] text-[14px] text-white">
        <span className="flex w-[36px] shrink-0 justify-center pl-[5px]">
          {kind === "date" && (
            <svg width="6" height="10" viewBox="0 0 6 10"><path d="M0 0v10l6-5z" fill="#aaa" /></svg>
          )}
        </span>
        <input type="checkbox" className="size-[13px] shrink-0 appearance-none bg-white" />
        <span className="flex w-[27px] shrink-0 justify-center">
          <FieldIcon kind={kind} />
        </span>
        <span>{name}</span>
      </label>
    </li>
  );
}

function Fields() {
  return (
    <aside className="flex w-[346px] shrink-0 flex-col bg-[#444]">
      <header className="flex h-[60px] shrink-0 items-center justify-between bg-[#212121] pr-[10px] pl-[15px]">
        <h2 className="pt-px font-[Roboto] text-[17px] font-medium text-white">FIELDS</h2>
        <button aria-label="Collapse Fields"><Chevron /></button>
      </header>
      <div className="shrink-0 border-b border-[#383838] pt-[5px] pb-[5px] pl-[5px]">
        <label className="flex h-[38px] items-center gap-[10px] border border-black bg-[#212121] pl-[14px]">
          <svg width="20" height="20" viewBox="0 0 20 20" fill="none" stroke="#aaa" strokeWidth="1.300">
            <circle cx="13" cy="7" r="6.200" /><path d="M8.500 11.500L.500 19.500" />
          </svg>
          <input type="text" aria-label="Search" placeholder="Search" className="min-w-0 flex-1 bg-transparent text-[14px] text-white outline-none placeholder:text-[#a6a6a6]" />
        </label>
      </div>
      <div className="mt-[11px] flex min-h-0 flex-1 overflow-hidden">
        <div className="flex-1 pl-[5px]">
          <ul className="-mt-[10px]"><Field name="Customer Name" /></ul>
          {tables.map((t) => (
            <section key={t.name}>
              <h3 className="flex h-[43px] items-center pb-1 pl-1 text-[14px] text-white">
                <svg width="8" height="8" viewBox="0 0 8 8"><path d="M8 0v8H0z" fill="#aaa" /></svg>
                <svg width="17" height="16" viewBox="0 0 17 16" className="mr-[15px] ml-[11px]">
                  <path d="M0 0h17v16H0z" fill="#999" />
                  <path d="M2 4h4v3H2zM7 4h3v3H7zM11 4h4v3h-4zM2 8h4v3H2zM7 8h3v3H7zM11 8h4v3h-4zM2 12h4v3H2zM7 12h3v3H7zM11 12h4v3h-4z" fill="#fff" />
                </svg>
                {t.name}
              </h3>
              <ul>
                {t.fields.map(([name, kind]) => (
                  <Field key={name} name={name} kind={kind} />
                ))}
              </ul>
            </section>
          ))}
        </div>
        <div className="mt-[70px] w-[2px] bg-[#6a6a6a]" />
      </div>
    </aside>
  );
}

export default function App() {
  return (
    <div className="flex h-screen flex-col overflow-hidden bg-white font-['Open_Sans',sans-serif]">
      <TopBar />
      <Ribbon />
      <div className="flex min-h-0 flex-1">
        <Rail />
        <Canvas />
        <Visualizations />
        <Fields />
      </div>
    </div>
  );
}
